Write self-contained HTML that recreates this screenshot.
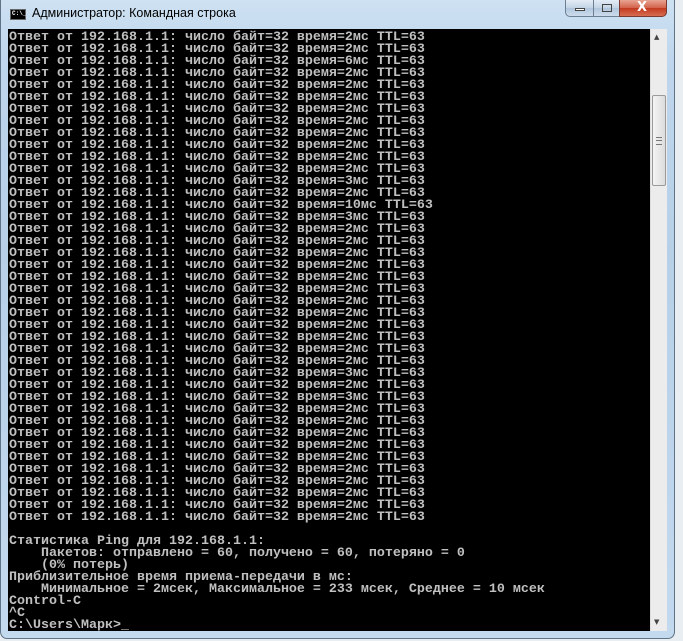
<!DOCTYPE html>
<html><head><meta charset="utf-8"><style>
html,body{margin:0;padding:0;width:683px;height:641px;overflow:hidden;background:#e9eef3;}
.win{position:absolute;left:0;top:-6px;width:675px;height:645px;border:1px solid #5f7486;border-radius:7px;
background:linear-gradient(180deg,#cfe2f3 0%,#bfd6ec 10%,#b7d0e8 40%,#c3d9ee 100%);box-sizing:border-box;}
.icon{position:absolute;left:10px;top:9px;width:16px;height:11px;background:#000;border:1px solid #666;box-sizing:border-box;}
.icon span{position:absolute;left:1px;top:0px;font:bold 6px "Liberation Mono",monospace;color:#fff;}
.title{position:absolute;left:32px;top:6px;font:12.5px "Liberation Sans","DejaVu Sans",sans-serif;color:#000;}
.btns{position:absolute;left:565px;top:0;height:17px;width:102px;}
.b{position:absolute;top:0;height:17px;border:1px solid #6d7f92;box-sizing:border-box;border-top:none;
background:linear-gradient(180deg,#e3ecf6,#c3d3e4 50%,#b0c5dc 51%,#cddcec);}
.bmin{left:0;width:29px;border-radius:0 0 0 5px;}
.bmax{left:28px;width:27px;}
.bcl{left:54px;width:48px;border-radius:0 0 5px 0;background:linear-gradient(180deg,#e8a493,#d2624b 50%,#c2391f 51%,#d76d51);border-color:#7a3a30;}
.con{position:absolute;left:8px;top:29px;width:642px;height:602px;background:#000;overflow:hidden;}
pre{margin:0;padding:3px 0 0 1px;font:bold 13.33px/12px "Liberation Mono","DejaVu Sans Mono",monospace;color:#c0c0c0;letter-spacing:0;}
.sb{position:absolute;left:650px;top:29px;width:17px;height:602px;background:#ececec;border-left:1px solid #ddd;box-sizing:border-box;}
.th{position:absolute;left:652px;top:95px;width:14px;height:91px;border:1px solid #9a9a9a;border-radius:2px;box-sizing:border-box;
background:linear-gradient(90deg,#f4f4f4,#dcdcdc);}
.arr{position:absolute;left:654px;font-size:7px;color:#444;font-family:"DejaVu Sans",sans-serif;}
</style></head><body>
<div class="win">
</div>
<div class="icon"><span>C:\_</span></div>
<div class="title">Администратор: Командная строка</div>
<div class="btns">
<div class="b bmin"><div style="position:absolute;left:9px;top:8px;width:10px;height:3px;border:1px solid #444;background:#fff;box-sizing:border-box"></div></div>
<div class="b bmax"><div style="position:absolute;left:8px;top:4px;width:10px;height:8px;border:1px solid #444;box-sizing:border-box"></div></div>
<div class="b bcl"><div style="position:absolute;left:17px;top:0px;color:#fff;font:bold 13px 'DejaVu Sans',sans-serif;">X</div></div>
</div>
<div class="con"><pre>Ответ от 192.168.1.1: число байт=32 время=2мс TTL=63
Ответ от 192.168.1.1: число байт=32 время=2мс TTL=63
Ответ от 192.168.1.1: число байт=32 время=6мс TTL=63
Ответ от 192.168.1.1: число байт=32 время=2мс TTL=63
Ответ от 192.168.1.1: число байт=32 время=2мс TTL=63
Ответ от 192.168.1.1: число байт=32 время=2мс TTL=63
Ответ от 192.168.1.1: число байт=32 время=2мс TTL=63
Ответ от 192.168.1.1: число байт=32 время=2мс TTL=63
Ответ от 192.168.1.1: число байт=32 время=2мс TTL=63
Ответ от 192.168.1.1: число байт=32 время=2мс TTL=63
Ответ от 192.168.1.1: число байт=32 время=2мс TTL=63
Ответ от 192.168.1.1: число байт=32 время=2мс TTL=63
Ответ от 192.168.1.1: число байт=32 время=3мс TTL=63
Ответ от 192.168.1.1: число байт=32 время=2мс TTL=63
Ответ от 192.168.1.1: число байт=32 время=10мс TTL=63
Ответ от 192.168.1.1: число байт=32 время=3мс TTL=63
Ответ от 192.168.1.1: число байт=32 время=2мс TTL=63
Ответ от 192.168.1.1: число байт=32 время=2мс TTL=63
Ответ от 192.168.1.1: число байт=32 время=2мс TTL=63
Ответ от 192.168.1.1: число байт=32 время=2мс TTL=63
Ответ от 192.168.1.1: число байт=32 время=2мс TTL=63
Ответ от 192.168.1.1: число байт=32 время=2мс TTL=63
Ответ от 192.168.1.1: число байт=32 время=2мс TTL=63
Ответ от 192.168.1.1: число байт=32 время=2мс TTL=63
Ответ от 192.168.1.1: число байт=32 время=2мс TTL=63
Ответ от 192.168.1.1: число байт=32 время=2мс TTL=63
Ответ от 192.168.1.1: число байт=32 время=2мс TTL=63
Ответ от 192.168.1.1: число байт=32 время=2мс TTL=63
Ответ от 192.168.1.1: число байт=32 время=3мс TTL=63
Ответ от 192.168.1.1: число байт=32 время=2мс TTL=63
Ответ от 192.168.1.1: число байт=32 время=3мс TTL=63
Ответ от 192.168.1.1: число байт=32 время=2мс TTL=63
Ответ от 192.168.1.1: число байт=32 время=2мс TTL=63
Ответ от 192.168.1.1: число байт=32 время=2мс TTL=63
Ответ от 192.168.1.1: число байт=32 время=2мс TTL=63
Ответ от 192.168.1.1: число байт=32 время=2мс TTL=63
Ответ от 192.168.1.1: число байт=32 время=2мс TTL=63
Ответ от 192.168.1.1: число байт=32 время=2мс TTL=63
Ответ от 192.168.1.1: число байт=32 время=2мс TTL=63
Ответ от 192.168.1.1: число байт=32 время=2мс TTL=63
Ответ от 192.168.1.1: число байт=32 время=2мс TTL=63

Статистика Ping для 192.168.1.1:
    Пакетов: отправлено = 60, получено = 60, потеряно = 0
    (0% потерь)
Приблизительное время приема-передачи в мс:
    Минимальное = 2мсек, Максимальное = 233 мсек, Среднее = 10 мсек
Control-C
^C
C:\Users\Марк&gt;_</pre></div>
<div class="sb"></div>
<div class="th"><div style="position:absolute;left:3px;top:41px;width:6px;height:6px;border-top:1px solid #777;border-bottom:1px solid #777;"><div style="margin-top:2px;border-top:1px solid #777"></div></div></div>
<div class="arr" style="top:33px">▲</div>
<div class="arr" style="top:618px">▼</div>
</body></html>
